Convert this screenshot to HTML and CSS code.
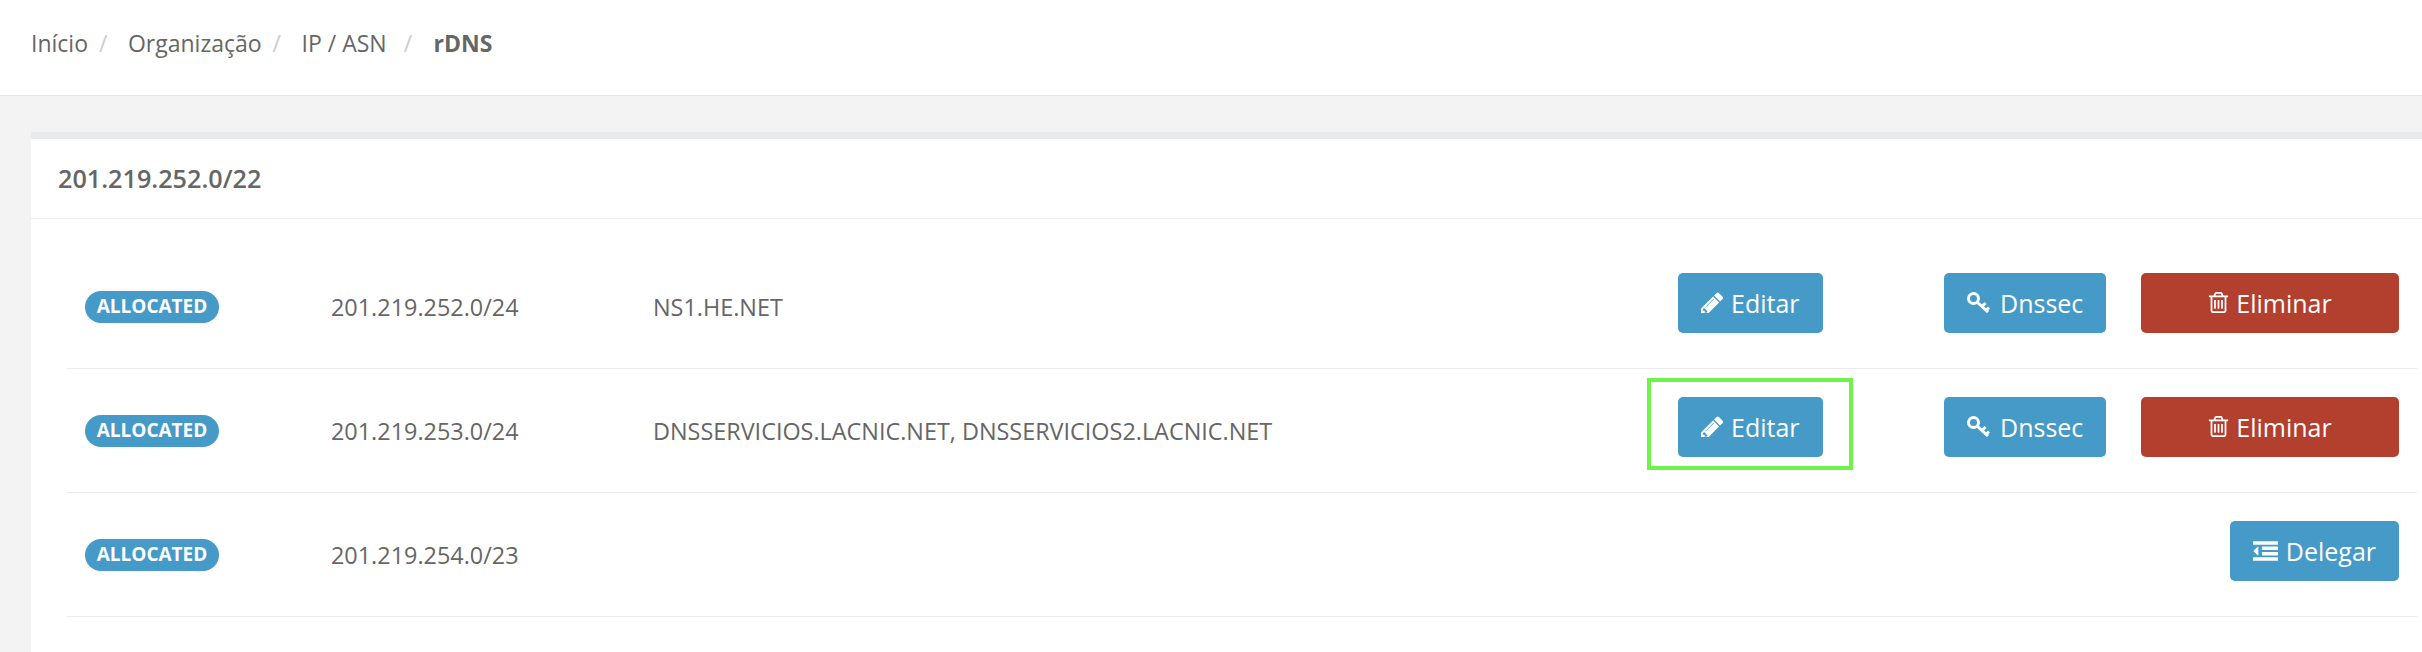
FILE: index.html
```html
<!DOCTYPE html>
<html lang="pt">
<head>
    <meta charset="UTF-8">
    <meta name="viewport" content="width=device-width, initial-scale=1.0">
    <title>rDNS</title>
    <link rel="stylesheet" href="styles.css">
</head>
<body>
    <svg class="icon-defs" width="0" height="0" aria-hidden="true">
        <symbol id="i-pencil" viewBox="128 128 1515 1408"><path d="M491 1536l91-91-235-235-91 91v107h128v128h107zm523-928q0-22-22-22-10 0-17 7l-542 542q-7 7-7 17 0 22 22 22 10 0 17-7l542-542q7-7 7-17zm-54-192l416 416-832 832h-416v-416zm683 96q0 53-37 90l-166 166-416-416 166-165q36-38 90-38 53 0 91 38l235 234q37 39 37 91z"/></symbol>
        <symbol id="i-key" viewBox="0 0 23 21"><g fill="none" stroke="currentColor" stroke-width="3"><ellipse cx="6.5" cy="6.5" rx="5" ry="5"/><path d="M10 10l11 10M15 14.500l3.500-3.500M19 18.500l3-3"/></g></symbol>
        <symbol id="i-trash" viewBox="128 128 1536 1536"><path d="M704 736v576q0 14-9 23t-23 9h-64q-14 0-23-9t-9-23v-576q0-14 9-23t23-9h64q14 0 23 9t9 23zm256 0v576q0 14-9 23t-23 9h-64q-14 0-23-9t-9-23v-576q0-14 9-23t23-9h64q14 0 23 9t9 23zm256 0v576q0 14-9 23t-23 9h-64q-14 0-23-9t-9-23v-576q0-14 9-23t23-9h64q14 0 23 9t9 23zm128 724v-948h-896v948q0 22 7 40.5t14.5 27 10.5 8.5h832q3 0 10.5-8.5t14.5-27 7-40.5zm-672-1076h448l-48-117q-7-9-17-11h-317q-10 2-17 11zm928 32v64q0 14-9 23t-23 9h-96v948q0 83-47 143.5t-113 60.5h-832q-66 0-113-58.5t-47-141.5v-952h-96q-14 0-23-9t-9-23v-64q0-14 9-23t23-9h309l70-167q15-37 54-63t79-26h320q40 0 79 26t54 63l70 167h309q14 0 23 9t9 23z"/></symbol>
        <symbol id="i-outdent" viewBox="0 128 1792 1408"><path d="M384 544v576q0 13-9.500 22.500t-22.500 9.500q-14 0-23-9l-288-288q-9-9-9-23t9-23l288-288q9-9 23-9 13 0 22.500 9.500t9.500 22.500zm1408 768v192q0 13-9.500 22.500t-22.500 9.500h-1728q-13 0-22.500-9.500t-9.500-22.500v-192q0-13 9.500-22.500t22.500-9.500h1728q13 0 22.500 9.500t9.500 22.500zm0-384v192q0 13-9.500 22.500t-22.500 9.500h-1088q-13 0-22.500-9.500t-9.500-22.500v-192q0-13 9.500-22.500t22.500-9.500h1088q13 0 22.500 9.500t9.500 22.500zm0-384v192q0 13-9.500 22.500t-22.500 9.500h-1088q-13 0-22.500-9.500t-9.500-22.500v-192q0-13 9.500-22.500t22.500-9.500h1088q13 0 22.500 9.500t9.500 22.500zm0-384v192q0 13-9.500 22.500t-22.500 9.500h-1728q-13 0-22.500-9.500t-9.500-22.500v-192q0-13 9.500-22.500t22.500-9.500h1728q13 0 22.500 9.500t9.500 22.500z"/></symbol>
    </svg>

    <header class="topbar">
        <ol class="breadcrumb">
            <li>Início<span class="sep">/</span></li>
            <li>Organização<span class="sep">/</span></li>
            <li>IP / ASN<span class="sep sep-wide">/</span></li>
            <li class="current">rDNS</li>
        </ol>
    </header>

    <main class="content">
        <section class="card">
            <h2 class="card-title">201.219.252.0/22</h2>
            <div class="rows">
                <div class="row">
                    <span class="badge">ALLOCATED</span>
                    <span class="cell">201.219.252.0/24</span>
                    <span class="cell">NS1.HE.NET</span>
                    <a class="button" href="#"><svg class="icon icon-pencil"><use href="#i-pencil"/></svg>Editar</a>
                    <a class="button" href="#"><svg class="icon icon-key"><use href="#i-key"/></svg>Dnssec</a>
                    <a class="button button-danger" href="#"><svg class="icon icon-trash"><use href="#i-trash"/></svg>Eliminar</a>
                </div>
                <div class="row">
                    <span class="badge">ALLOCATED</span>
                    <span class="cell">201.219.253.0/24</span>
                    <span class="cell">DNSSERVICIOS.LACNIC.NET, DNSSERVICIOS2.LACNIC.NET</span>
                    <a class="button button-marked" href="#"><svg class="icon icon-pencil"><use href="#i-pencil"/></svg>Editar</a>
                    <a class="button" href="#"><svg class="icon icon-key"><use href="#i-key"/></svg>Dnssec</a>
                    <a class="button button-danger" href="#"><svg class="icon icon-trash"><use href="#i-trash"/></svg>Eliminar</a>
                </div>
                <div class="row">
                    <span class="badge">ALLOCATED</span>
                    <span class="cell">201.219.254.0/23</span>
                    <span class="cell"></span>
                    <a class="button button-delegate" href="#"><svg class="icon icon-outdent"><use href="#i-outdent"/></svg>Delegar</a>
                </div>
            </div>
        </section>
    </main>
</body>
</html>
```

FILE: styles.css
```css
html, body {
    height: 100%;
}
body {
    font-family: "Open Sans", "Liberation Sans", sans-serif;
    font-size: 23.4px;
    color: #666;
    margin: 0;
    background-color: #f3f3f3;
    display: flex;
    flex-direction: column;
    overflow: hidden;
}
.icon-defs {
    position: absolute;
}
.topbar {
    height: 85px;
    flex: none;
    background-color: white;
    border-bottom: 1px solid #e7e7e7;
    display: flex;
    align-items: center;
    padding: 0 0 10px 31px;
}
.breadcrumb {
    display: flex;
    list-style: none;
    margin: 0;
    padding: 0;
    font-size: 23px;
}
.breadcrumb .sep {
    color: #ccc;
    margin: 0 20.5px 0 11px;
}
.breadcrumb .sep-wide {
    margin: 0 21.5px 0 17px;
}
.breadcrumb .current {
    font-weight: 700;
}
.content {
    flex: 1;
    padding: 36px 0 0 31px;
    min-height: 0;
}
.card {
    height: 100%;
    background-color: white;
    border-top: 7px solid #e9eaeb;
}
.card-title {
    margin: 0;
    height: 79px;
    line-height: 79px;
    padding-left: 27px;
    font-size: 25.2px;
    font-weight: 600;
    border-bottom: 1px solid #ececec;
}
.rows {
    padding: 26px 5px 0 36px;
}
.row {
    display: grid;
    grid-template-columns: 246px 322px 1fr 266px 197px 258px;
    align-items: center;
    height: 124px;
    padding: 0 18px 8px 18px;
    box-sizing: border-box;
    border-bottom: 1px solid #ececec;
}
.cell {
    margin-top: 9px;
}
.badge {
    justify-self: start;
    margin-top: 9px;
    width: 134px;
    height: 32px;
    line-height: 31px;
    text-align: center;
    border-radius: 16px;
    background-color: #469ac7;
    color: white;
    font-size: 19px;
    font-weight: 700;
}
.button {
    display: inline-flex;
    align-items: center;
    justify-content: center;
    justify-self: start;
    height: 60px;
    padding: 0 23px;
    background-color: #469ac7;
    color: white;
    font-size: 25px;
    text-decoration: none;
    border-radius: 5px;
}
.button-danger {
    background-color: #b33f2e;
    width: 258px;
    padding: 0;
}
.button-delegate {
    grid-column: 4 / -1;
    justify-self: end;
}
.button-marked {
    position: relative;
}
.button-marked::after {
    content: "";
    position: absolute;
    left: -31px;
    right: -30px;
    top: -19px;
    bottom: -13px;
    border: 4px solid #6ff24a;
}
.icon {
    margin-right: 8px;
    fill: currentColor;
}
.icon-pencil {
    width: 22px;
    height: 21px;
}
.icon-key {
    width: 23px;
    height: 21px;
    margin-right: 10px;
}
.icon-trash {
    width: 21px;
    height: 21px;
    margin-right: 7px;
}
.icon-outdent {
    width: 25px;
    height: 20px;
}
```
